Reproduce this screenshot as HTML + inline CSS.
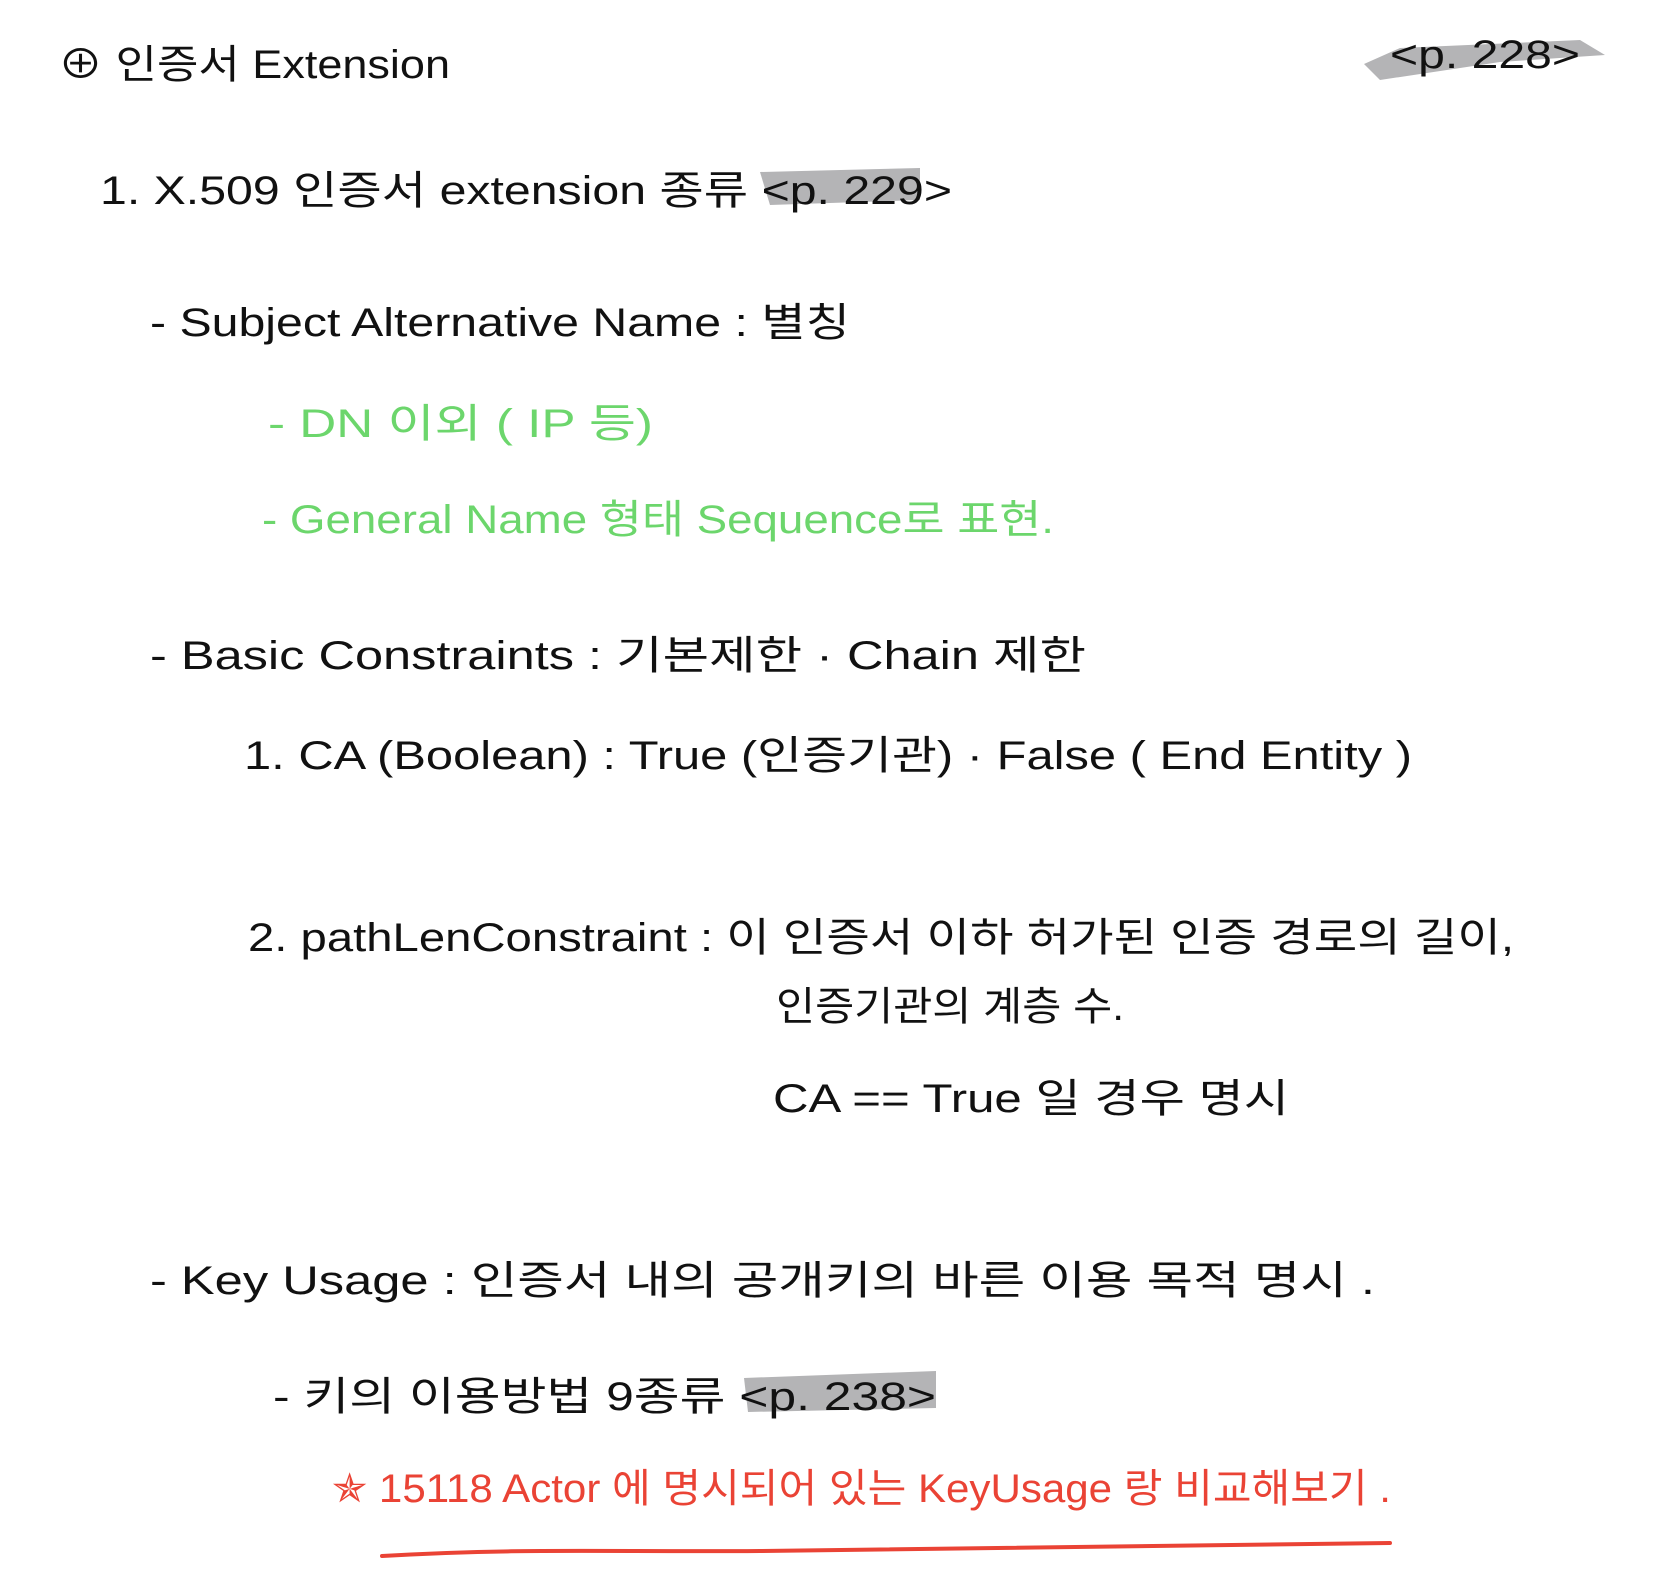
<!DOCTYPE html>
<html><head><meta charset="utf-8"><style>
html,body{margin:0;padding:0;background:#fff;}
svg{display:block;}
text{font-family:"Liberation Sans","Noto Sans CJK KR",sans-serif;font-size:40px;}
</style></head><body>
<svg width="1668" height="1591" viewBox="0 0 1668 1591" xmlns="http://www.w3.org/2000/svg">
<rect width="1668" height="1591" fill="#fff"/>
<!-- highlights -->
<path d="M1364 64 L1400 48 L1580 40 L1605 55 L1500 62 L1380 80 Z" fill="#b4b4b6"/>
<path d="M760 172 L920 168 L920 200 L770 205 Z" fill="#b4b4b6"/>
<path d="M744 1378 L936 1371 L936 1408 L748 1412 Z" fill="#b4b4b6"/>
<g fill="#111">
<text x="58" y="78" textLength="392" lengthAdjust="spacingAndGlyphs">⊕ 인증서  Extension</text>
<text x="1390" y="68" textLength="190" lengthAdjust="spacingAndGlyphs">&lt;p. 228&gt;</text>
<text x="100" y="204" textLength="852" lengthAdjust="spacingAndGlyphs">1. X.509 인증서 extension 종류  &lt;p. 229&gt;</text>
<text x="150" y="336" textLength="700" lengthAdjust="spacingAndGlyphs">- Subject Alternative Name  :  별칭</text>
<text x="150" y="669" textLength="936" lengthAdjust="spacingAndGlyphs">- Basic Constraints  :  기본제한 · Chain 제한</text>
<text x="244" y="769" textLength="1168" lengthAdjust="spacingAndGlyphs">1. CA (Boolean)  :  True (인증기관) · False ( End Entity )</text>
<text x="248" y="951" textLength="1266" lengthAdjust="spacingAndGlyphs">2. pathLenConstraint  :  이 인증서 이하 허가된 인증 경로의 길이,</text>
<text x="776" y="1020" textLength="348" lengthAdjust="spacingAndGlyphs">인증기관의 계층 수.</text>
<text x="773" y="1112" textLength="516" lengthAdjust="spacingAndGlyphs">CA == True 일 경우 명시</text>
<text x="150" y="1294" textLength="1225" lengthAdjust="spacingAndGlyphs">- Key Usage  :  인증서 내의 공개키의 바른 이용 목적 명시 .</text>
<text x="273" y="1410" textLength="663" lengthAdjust="spacingAndGlyphs">- 키의 이용방법 9종류  &lt;p. 238&gt;</text>
</g>
<g fill="#6cd66c">
<text x="268" y="437" textLength="385" lengthAdjust="spacingAndGlyphs">- DN 이외 ( IP 등)</text>
<text x="262" y="533" textLength="792" lengthAdjust="spacingAndGlyphs">- General Name 형태 Sequence로 표현.</text>
</g>
<g fill="#ea4335">
<text x="332" y="1502" textLength="1059" lengthAdjust="spacingAndGlyphs">✯ 15118 Actor 에 명시되어 있는 KeyUsage 랑 비교해보기 .</text>
</g>
<path d="M382 1556 C520 1548 600 1552 760 1551 S1100 1548 1390 1543" stroke="#ea4335" stroke-width="4" fill="none" stroke-linecap="round"/>
</svg>
</body></html>
